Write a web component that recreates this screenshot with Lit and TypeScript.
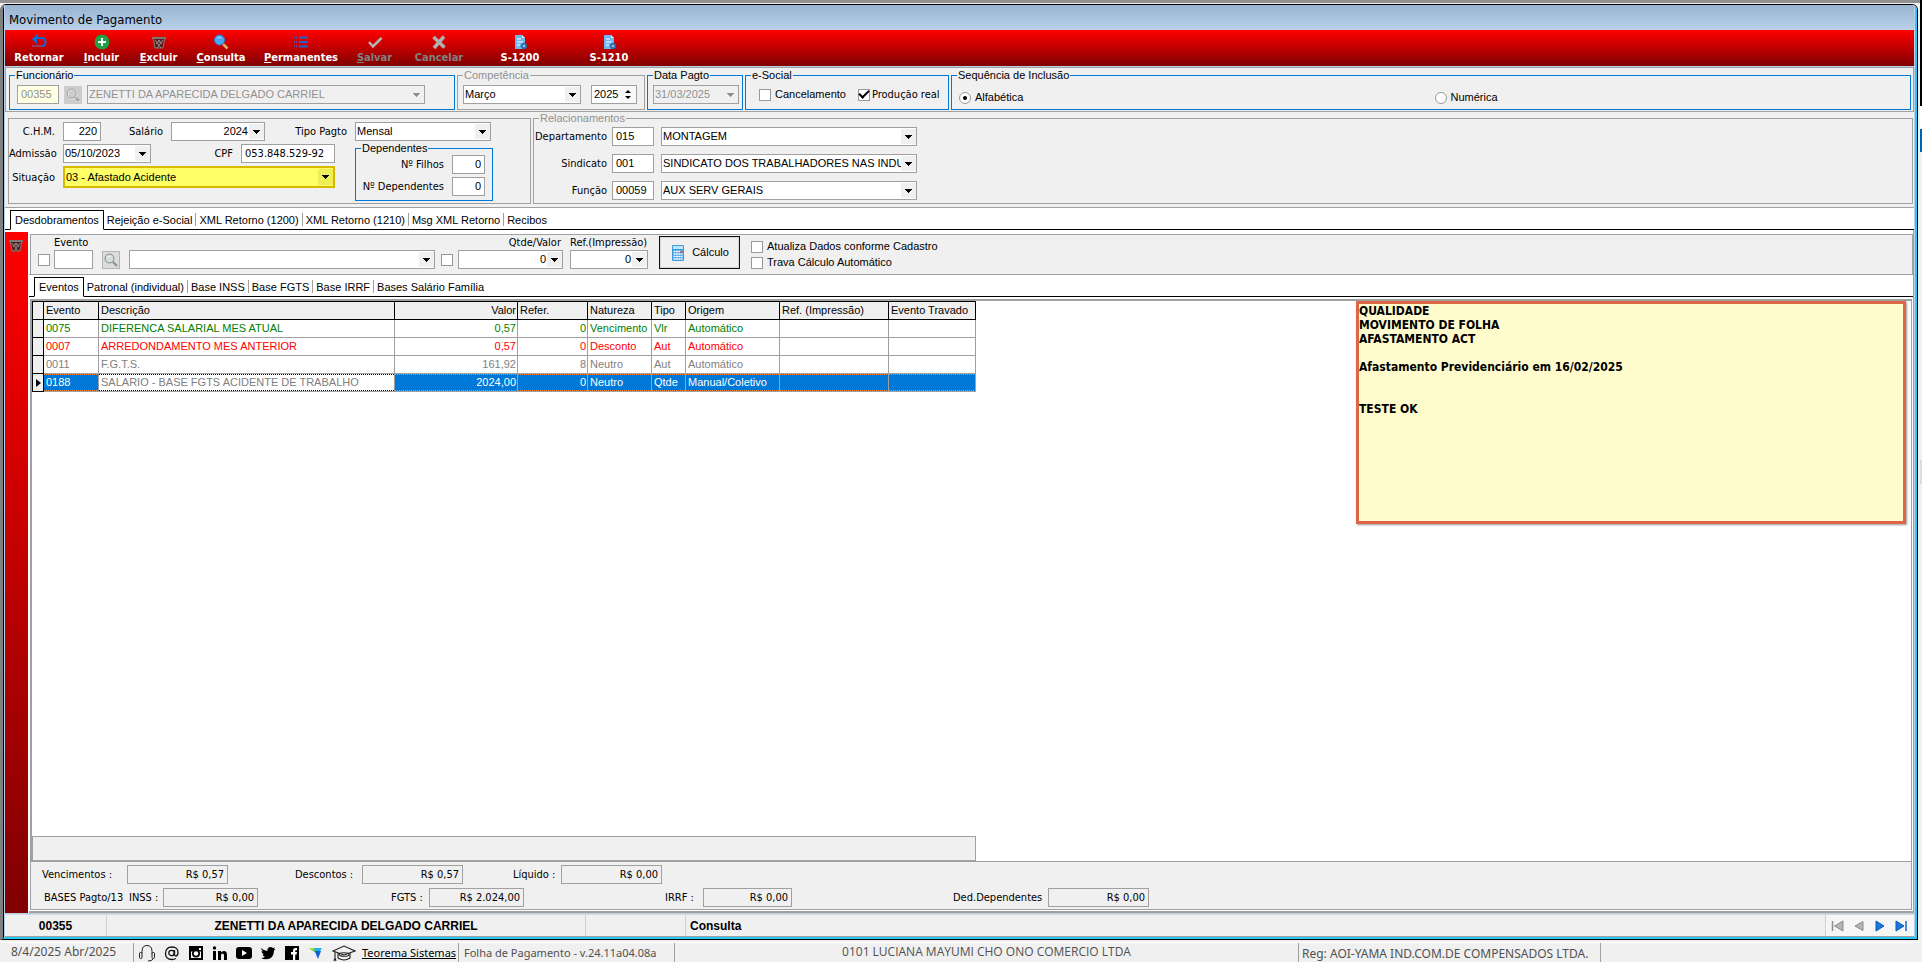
import { LitElement, html, css, svg, nothing } from "lit";
import { customElement } from "lit/decorators.js";
import { classMap } from "lit/directives/class-map.js";

const glyph = (body: unknown, w = 16, h = 16) =>
  html`<svg class="ic" width=${w} height=${h} viewBox="0 0 ${w} ${h}" aria-hidden="true">${body}</svg>`;

const icons: Record<string, unknown> = {
  back: glyph(svg`<path d="M2 5.500L6 1.500V4h5q3.500 0 3.500 4t-3.500 4" fill="none" stroke="#1068d0" stroke-width="2"/><path d="M1 5.500L6 1v9z" fill="#1068d0"/><path d="M2 11v2M4 11v2M6 11v2M8 11v2M10 11v2" stroke="#5a78c0" stroke-width="1"/>`),
  add: glyph(svg`<circle cx="8" cy="8" r="7.500" fill="#1fa045"/><path d="M8 4v8M4 8h8" stroke="#fff" stroke-width="2"/>`),
  trash: glyph(svg`<path d="M1 3h14v2H1z" fill="#777"/><path d="M2.500 5l1.500 9h8l1.500-9" fill="#5b1a1a" stroke="#7d7d7d"/><path d="M4 6l6 8M12 6l-6 8M5 10l3-4 3 4M8 6v3" stroke="#8d8d8d" fill="none"/>`),
  find: glyph(svg`<path d="M10 10l4.500 4.500" stroke="#d9b070" stroke-width="2.500"/><circle cx="6.500" cy="6" r="5" fill="#4aa8f5" stroke="#2b7fd6"/><path d="M4 4.500q2-2.500 4-.5" stroke="#b9e0ff" fill="none"/>`),
  list: glyph(svg`<path d="M6 3.500h9M6 8h9M6 12.500h9" stroke="#1666d8" stroke-width="2"/><path d="M1 3.500h3M1 8h3M1 12.500h3" stroke="#5a55a8" stroke-width="2" stroke-dasharray="1 1"/>`),
  ok: glyph(svg`<path d="M2 8l4 4.500L14.500 4" fill="none" stroke="#b5b5b5" stroke-width="2.500"/>`),
  cancel: glyph(svg`<path d="M2.500 3L13.500 13.500M13 2.500L3 14" stroke="#b0b0b0" stroke-width="3.500"/>`),
  doc: glyph(svg`<path d="M3 1h7l3 3v11H3z" fill="#6bb8f5"/><path d="M10 1l3 3h-3z" fill="#d9eeff"/><path d="M5 5h4M5 8h6M5 11h3" stroke="#fff"/><circle cx="12" cy="12" r="3" fill="#3178b8" stroke="#1c4f86" stroke-dasharray="1 1"/><circle cx="12" cy="12" r="1" fill="#c9d9e8"/>`),
  lens: glyph(svg`<path d="M10 10l4 4" stroke="#8d8d8d" stroke-width="2"/><circle cx="6.500" cy="6.500" r="4.500" fill="#cfe0dc" stroke="#7f8886"/><path d="M4.500 5.500q1.500-2 3-1" stroke="#fff" fill="none"/>`),
  lensOff: glyph(svg`<path d="M11 11l4 4" stroke="#fff"/><path d="M10 10l4 4" stroke="#a0a0a0" stroke-width="2"/><circle cx="7.500" cy="7.500" r="4.500" fill="none" stroke="#e8e8e8"/><circle cx="6.500" cy="6.500" r="4.500" fill="none" stroke="#a0a0a0"/>`),
  calc: glyph(svg`<rect x="2" y="0" width="12" height="16" rx="1" fill="#3d9be0"/><rect x="3" y="1" width="10" height="3" fill="#bfe3fa"/><path d="M3.500 6.500h9M3.500 9h9M3.500 11.500h9M3.500 14h9" stroke="#fff" stroke-width="1.600" stroke-dasharray="2 .400"/><path d="M10.500 6h2v2h-2z" fill="#e23b2e"/>`),
  headset: glyph(svg`<g fill="none" stroke="#222"><path d="M4 9.500V7.500q0-6 5-6t5 6v2"/><rect x="1.500" y="8.500" width="2.500" height="6" rx="1"/><rect x="14" y="8.500" width="2.500" height="6" rx="1"/><path d="M15 15q-1 2-5 2"/></g>`, 18, 18),
  at: glyph(svg`<g fill="none" stroke="#111" stroke-width="1.300"><circle cx="7.500" cy="8" r="2.700"/><path d="M10.500 5v4.500q0 1.500 1.500 1.500 2-.5 2-3.500 0-5.500-6-5.500-6.500 0-6.500 6.500 0 6 6.500 6 2 0 4-1"/></g>`),
  insta: glyph(svg`<rect x="1" y="1" width="14" height="14" fill="#000"/><rect x="3" y="6.500" width="10" height="6.500" fill="#fff"/><circle cx="8" cy="8.500" r="4" fill="#000"/><circle cx="8" cy="8.500" r="2.300" fill="#fff"/><rect x="11" y="3" width="2" height="2" fill="#fff"/>`),
  linkedin: glyph(svg`<path d="M1 6h3v9H1zM6 6h3v1.500Q10 6 12 6q3 0 3 4v5h-3v-4.500Q12 8.500 10.500 8.500T9 10.500V15H6z"/><circle cx="2.500" cy="3" r="1.700"/>`),
  youtube: glyph(svg`<rect x="0" y="2" width="16" height="12" rx="3"/><path d="M6 5v6l5-3z" fill="#fff"/>`),
  twitter: glyph(svg`<path d="M1 3q3 3 6.500 3Q7 2.500 10 2q2 0 3 1l2-.5-1.200 1.800L15.500 4 14 5.500Q14 14 6 14.300 3 14.300 1 13q2.500 0 4-1.200Q3 11.500 2.500 9.500H4Q1.500 8.500 1.500 6L3 6.400Q1 4.500 1 3z"/>`),
  facebook: glyph(svg`<rect x="1" y="1" width="14" height="14"/><path d="M9 15V9.500H7V7h2V5.500Q9 3 11.500 3H13v2.300h-1q-.8 0-.8.700v1H13l-.4 2.500h-1.400V15z" fill="#fff"/>`),
  brand: glyph(svg`<path d="M1 3h6l4 5-2 1z" fill="#5cc72c"/><path d="M1 3h4l3 3z" fill="#c8e02a"/><path d="M6 3h8l-3 5-4-1z" fill="#1fb5e8"/><path d="M7 6l6 0-3 8q-2-4-3-8z" fill="#1560d4"/>`),
  cap: glyph(svg`<g fill="none" stroke="#222" stroke-width="1.100"><path d="M1 7L12 2l11 5-11 4z"/><path d="M6 9v5q6 4 12 0V9"/><ellipse cx="12" cy="10.500" rx="5" ry="1.800"/><path d="M3 8v7M2 17l1-3 1 3"/></g>`, 24, 18),
  first: glyph(svg`<path d="M2.500 3v10" stroke="#8c8c8c" stroke-width="1.500"/><path d="M13 3v10L4.500 8z" fill="#b4b4b4" stroke="#8c8c8c"/>`),
  prev: glyph(svg`<path d="M12 3.500v9L4 8z" fill="#b4b4b4" stroke="#8c8c8c"/>`),
  next: glyph(svg`<path d="M4 3v10l8-5z" fill="#1878e0" stroke="#0d57b5"/>`),
  last: glyph(svg`<path d="M3 3v10l8-5z" fill="#1878e0" stroke="#0d57b5"/><path d="M13 3v10" stroke="#0d6ad8" stroke-width="1.500"/>`),
};

interface Tool { label: string; icon: string; width: number; key?: boolean; off?: boolean }
const tools: Tool[] = [
  { label: "Retornar", icon: "back", width: 68 },
  { label: "Incluir", icon: "add", width: 57, key: true },
  { label: "Excluir", icon: "trash", width: 57, key: true },
  { label: "Consulta", icon: "find", width: 68, key: true },
  { label: "Permanentes", icon: "list", width: 92, key: true },
  { label: "Salvar", icon: "ok", width: 55, key: true, off: true },
  { label: "Cancelar", icon: "cancel", width: 74, off: true },
  { label: "S-1200", icon: "doc", width: 88 },
  { label: "S-1210", icon: "doc", width: 90 },
];

const mainTabs = ["Desdobramentos", "Rejeição e-Social", "XML Retorno (1200)", "XML Retorno (1210)", "Msg XML Retorno", "Recibos"];
const subTabs = ["Eventos", "Patronal (individual)", "Base INSS", "Base FGTS", "Base IRRF", "Bases Salário Família"];

const columns = ["Evento", "Descrição", "Valor", "Refer.", "Natureza", "Tipo", "Origem", "Ref. (Impressão)", "Evento Travado"];
const rows = [
  { tone: "credit", cells: ["0075", "DIFERENCA SALARIAL MES ATUAL", "0,57", "0", "Vencimento", "Vlr", "Automático", "", ""] },
  { tone: "debit", cells: ["0007", "ARREDONDAMENTO MES ANTERIOR", "0,57", "0", "Desconto", "Aut", "Automático", "", ""] },
  { tone: "neutral", cells: ["0011", "F.G.T.S.", "161,92", "8", "Neutro", "Aut", "Automático", "", ""] },
  { tone: "current", cells: ["0188", "SALARIO - BASE FGTS ACIDENTE DE TRABALHO", "2024,00", "0", "Neutro", "Qtde", "Manual/Coletivo", "", ""] },
];

const links = ["headset", "at", "insta", "linkedin", "youtube", "twitter", "facebook", "brand", "cap"];

const noteText = `QUALIDADE
MOVIMENTO DE FOLHA
AFASTAMENTO ACT

Afastamento Previdenciário em 16/02/2025


TESTE OK`;

@customElement("app-root")
export class AppRoot extends LitElement {
  static styles = css`
    :host {
      --face: #f0f0f0;
      --line: #a0a0a0;
      --blue: #0078d7;
      --sans: "Liberation Sans", Arial, sans-serif;
      --ui: "DejaVu Sans Condensed", "DejaVu Sans", sans-serif;
      display: flex;
      height: 100vh;
      background: var(--face);
      font: 11px/13px var(--sans);
      color: #000;
    }
    * { box-sizing: border-box; }
    svg { display: block; flex: none; }
    button, input, select, textarea { font: inherit; color: inherit; margin: 0; border-radius: 0; outline: none; }
    .screen { flex: 1; min-width: 0; display: flex; flex-direction: column; border-top: 3px solid #909090; }
    .edge {
      width: 2px;
      background: linear-gradient(#000 106px, #fff 106px 129px, #0063b1 129px 152px, #f0f0f0 152px 460px, #dcdcdc 460px 484px, #f0f0f0 484px);
    }
    .window {
      flex: 1; min-height: 0;
      display: flex; flex-direction: column;
      margin: 1px 2px 2px 0;
      border: 1px solid #000;
      border-left: 3px solid #808080;
      border-radius: 6px 6px 0 0;
      overflow: hidden;
    }
    .frame {
      flex: 1; min-height: 0;
      display: flex; flex-direction: column;
      border-left: 1px solid #000;
      border-right: 2px solid #2cc8f5;
      border-bottom: 2px solid #2cc8f5;
      padding: 0 1px 0 1px;
      background: #b9d1ea;
    }
    .title {
      flex: none; height: 25px; margin: 0; padding: 0 4px;
      background: linear-gradient(#98b3d0, #b9d1ea);
      font: 13px/29px var(--ui);
    }
    .toolbar { flex: none; display: flex; height: 36px; background: linear-gradient(#f00, #800000); }
    .tool {
      display: flex; flex-direction: column; align-items: center; gap: 1px;
      padding: 4px 0 0; border: 0; background: none;
      color: #fff; font: bold 11px/13px var(--ui);
    }
    .tool:disabled { color: #808080; }

    fieldset { margin: 0; padding: 0; border: 1px solid var(--line); min-width: 0; }
    fieldset.on { border-color: var(--blue); }
    legend { margin-left: 5px; padding: 0 1px; color: #909090; line-height: 13px; }
    .on > legend { color: #000; }

    .filters {
      flex: none; display: flex; gap: 2px;
      margin-top: 1px; padding: 1px 2px 1px 3px; height: 45px;
      border: 1px solid var(--line); background: var(--face);
    }
    .row { display: flex; align-items: center; }
    .filters .row { padding: 3px 0 0 7px; }
    .filters .f-func { width: 446px; }
    .filters .f-func .row { gap: 5px; }
    .filters .f-comp { width: 188px; }
    .filters .f-comp .row { padding-left: 5px; gap: 10px; }
    .filters .f-date { width: 96px; }
    .filters .f-date .row { padding-left: 5px; }
    .filters .f-esoc { width: 204px; }
    .filters .f-esoc .row { padding: 6px 0 0 13px; gap: 12px; }
    .filters .f-seq { flex: 1; }
    .filters .f-seq .row { padding: 9px 0 0 7px; display: grid; grid-template-columns: 1fr 1fr; }

    .box {
      height: 19px; padding: 0 3px 1px; border: 1px solid var(--line); background: #fff;
      min-width: 0; width: 40px;
    }
    .box.code { background: #ffffe1; color: #909090; }
    .num { text-align: right; }
    .combo { position: relative; display: flex; height: 19px; border: 1px solid var(--line); background: #fff; }
    .combo select {
      appearance: none; flex: 1; min-width: 0; border: 0; padding: 0 14px 0 1px; background: none; text-overflow: clip; opacity: 1;
    }
    .combo select.num { text-align-last: right; padding-right: 16px; }
    .combo::after {
      content: ""; position: absolute; right: 0; top: 1px; bottom: 1px; width: 15px; pointer-events: none;
      background:
        linear-gradient(#000, #000) center 6px / 7px 1px no-repeat,
        linear-gradient(#000, #000) center 7px / 5px 1px no-repeat,
        linear-gradient(#000, #000) center 8px / 3px 1px no-repeat,
        linear-gradient(#000, #000) center 9px / 1px 1px no-repeat,
        var(--face);
    }
    .combo.off { background: var(--face); color: #909090; }
    .combo.off::after { opacity: .4; }
    .combo.mark { height: 22px; border: 2px solid #d9b800; background: #ffff66; }
    .combo.mark::after { background-color: #eeee58; }
    .squash {
      display: flex; align-items: center; justify-content: center; width: 18px; height: 18px; padding: 0;
      border: 1px solid #b4b4b4; background: #dcdcdc;
    }
    .squash:disabled { background: #ccc; border-color: #ccc; }
    .spin { display: flex; width: 46px; height: 19px; border: 1px solid var(--line); background: #fff; }
    .spin input { width: 28px; border: 0; padding: 0 0 1px 2px; background: none; }
    .arrows { flex: 1; display: grid; background: #f8f8f8; align-content: space-evenly; justify-items: center; }
    .arrows i { border: 3px solid transparent; border-top: 0; border-bottom: 3px solid #000; }
    .arrows i + i { border-bottom: 0; border-top: 3px solid #000; }

    .check { display: inline-flex; align-items: center; gap: 4px; white-space: nowrap; }
    .check input { appearance: none; flex: none; width: 12px; height: 12px; border: 1px solid #999; background: #fff; display: grid; place-items: center; }
    .check input[type="radio"] { border-radius: 50%; }
    .check input[type="radio"]:checked::before { content: ""; width: 4px; height: 4px; border-radius: 50%; background: #000; }
    .check input[type="checkbox"]:checked::before {
      content: ""; width: 8px; height: 4px; margin-top: -3px; border: solid #000; border-width: 0 0 2px 2px; transform: rotate(-45deg);
    }
    .ui { font-family: var(--ui); }
    .check.ui { gap: 2px; }

    .person { flex: none; display: flex; gap: 2px; height: 95px; padding: 0 1px 3px 3px; background: var(--face); }
    .details { width: 523px; margin-top: 6px; padding: 3px 0 0 0; border: 1px solid var(--line); display: flex; flex-direction: column; gap: 1px; }
    .lab { font-family: var(--ui); text-align: right; white-space: nowrap; padding-right: 8px; }
    .l54 { width: 54px; }
    .l70 { width: 70px; }
    .l90 { width: 90px; }
    .w33 { width: 33px; }
    .w38 { width: 38px; }
    .w42 { width: 42px; }
    .w86 { width: 86px; }
    .w88 { width: 88px; }
    .w94 { width: 94px; }
    .w118 { width: 118px; }
    .w136 { width: 136px; }
    .w256 { width: 256px; }
    .w272 { width: 272px; }
    .w338 { width: 338px; }
    .split { display: flex; gap: 20px; }
    .stack { display: flex; flex-direction: column; gap: 3px; }
    .split > .stack { padding-top: 2px; }
    .deps { width: 138px; height: 59px; }
    .deps .lab { width: 96px; }
    .rel { flex: 1; }
    .rel .stack { gap: 8px; padding-top: 2px; }
    .rel .lab { width: 78px; padding-right: 5px; }
    .rel .box { margin-right: 7px; }

    .tabs { flex: none; display: flex; align-items: flex-end; height: 23px; padding: 0 5px; background: #fff; border-top: 1px solid var(--line); box-shadow: inset 0 -1px #000; white-space: nowrap; }
    .tab { padding: 0 3px; height: 19px; border: 0; background: none; line-height: 19px; }
    .tab + .tab:not(:last-child) { padding-right: 4px; background: linear-gradient(var(--line), var(--line)) right 2px / 1px 13px no-repeat; }
    .tab.active { height: 20px; padding: 0 4px; border: 1px solid #000; border-bottom-color: #fff; background: #fff; }

    .work { flex: 1; min-height: 0; display: flex; gap: 1px; background: #fff; padding-top: 2px; border-right: 1px solid var(--line); }
    .rail { width: 23px; padding: 5px 0 0 3px; background: linear-gradient(#f00, #800000); }
    .pane { flex: 1; min-width: 0; display: flex; flex-direction: column; padding: 2px 0 1px; border-bottom: 2px solid var(--line); }
    .entry { flex: none; display: flex; height: 40px; margin-left: 1px; border: 1px solid var(--line); border-bottom: 0; background: var(--face); }
    .entry .lab { text-align: left; padding: 0; }
    .eg { display: grid; grid-template-rows: 15px 19px; align-items: center; align-content: start; }
    .eg-a { grid-template-columns: 16px 39px; padding-left: 7px; }
    .eg-b { grid-template-columns: 18px 306px; column-gap: 9px; padding-left: 9px; }
    .eg-c { grid-template-columns: 12px 105px; column-gap: 5px; padding-left: 6px; }
    .eg-d { grid-template-columns: 78px; padding-left: 7px; }
    .lo { grid-row: 2; }
    .eg .c2 { grid-column: 2; }
    .entry .eg-c .lab { text-align: right; padding-right: 2px; }
    .eg .w39 { width: 39px; }
    .run {
      display: flex; align-items: center; justify-content: center; gap: 6px;
      width: 81px; height: 33px; margin: 1px 11px 0; padding: 0; border: 1px solid #111; background: var(--face);
      box-shadow: inset 0 0 0 1px #d4d4d4;
    }
    .opts { display: flex; flex-direction: column; justify-content: center; gap: 3px; }
    .sub { padding-left: 5px; }
    .sheet {
      flex: 1; min-height: 0; display: flex; justify-content: space-between;
      margin: 2px 1px 0 1px; border: 1px solid var(--line); border-width: 2px 1px 1px 2px; background: #fff; padding-right: 5px;
    }
    .gridcol { display: flex; flex-direction: column; justify-content: space-between; width: 944px; flex: none; }
    table { table-layout: fixed; border-collapse: separate; border-spacing: 0; width: 944px; border-left: 1px solid #000; }
    th, td { height: 18px; padding: 0 1px 0 2px; border-right: 1px solid var(--line); border-bottom: 1px solid var(--line); overflow: hidden; white-space: nowrap; text-align: left; font-weight: normal; }
    th { height: 19px; border-color: #000; border-top: 1px solid #000; background: var(--face); }
    td.ind { border-color: #000; background: var(--face); padding: 0; }
    th.r, td.r { text-align: right; }
    .k0 { width: 11px; } .k1 { width: 55px; } .k2 { width: 296px; } .k3 { width: 123px; } .k4 { width: 70px; }
    .k5 { width: 64px; } .k6 { width: 34px; } .k7 { width: 94px; } .k8 { width: 109px; } .k9 { width: 87px; }
    .credit { color: #008000; }
    .debit { color: #f00; }
    .neutral { color: #808080; }
    .current td:not(.ind) {
      --dot: #ff8728;
      color: #fff;
      background:
        repeating-linear-gradient(90deg, var(--dot) 0 1px, transparent 1px 2px) top / 100% 1px no-repeat,
        repeating-linear-gradient(90deg, var(--dot) 0 1px, transparent 1px 2px) bottom / 100% 1px no-repeat,
        var(--blue);
    }
    .current td.desc:not(.ind) { --dot: #000; color: #808080; background-color: #fff; }
    .pointer { display: block; width: 0; margin-left: 3px; border: 4px solid transparent; border-left: 5px solid #000; border-right: 0; }
    .gridfoot { height: 25px; border: 1px solid var(--line); background: var(--face); }
    .note {
      width: 550px; height: 223px; resize: none; padding: 0; border: 3px solid #dc6646;
      background: #fffbcc; font: bold 12px/14px var(--ui); box-shadow: 1px 1px 2px #999; overflow: hidden;
    }
    .totals { flex: none; display: flex; flex-direction: column; gap: 4px; height: 48px; margin: 0 1px 0 1px; padding: 3px 0 0; border: 1px solid var(--line); border-top: 0; background: var(--face); font-family: var(--ui); }
    .totals label, .totals span { white-space: nowrap; }
    .totals .box { background: var(--face); }
    .t1 { display: flex; align-items: center; }
    .g11 { margin-left: 11px; } .g13 { margin-left: 13px; } .g50 { margin-left: 50px; } .g67 { margin-left: 67px; }
    .g133 { margin-left: 133px; } .g141 { margin-left: 141px; } .g161 { margin-left: 161px; }
    .n34 { width: 34px; } .n38 { width: 38px; } .n48 { width: 48px; } .n67 { width: 67px; } .n85 { width: 85px; } .n95 { width: 95px; }
    .totals .v101 { width: 101px; } .totals .v95 { width: 95px; } .totals .v89 { width: 89px; }

    .record { flex: none; display: flex; height: 23px; margin-top: 1px; border-top: 1px solid #d8d8d8; border-bottom: 1px solid var(--line); background: var(--face); font: bold 12px/23px var(--sans); }
    .record > span { border-right: 1px solid #d0d0d0; text-align: center; }
    .c-code { width: 102px; } .c-name { width: 479px; } .c-gap { width: 100px; }
    .record .c-mode { flex: 1; text-align: left; padding-left: 4px; }
    .nav { display: flex; gap: 5px; padding: 0 5px 0 4px; align-items: center; background: #f6f6f6; }
    .nav button { border: 0; background: none; padding: 0; }

    .status { flex: none; display: flex; height: 20px; background: var(--face); border-top: 1px solid #fff; color: #505050; font: 12px/18px "Noto Sans", "Open Sans", sans-serif; white-space: nowrap; }
    .status > * { border-right: 1px solid var(--line); overflow: hidden; }
    .s-date { width: 134px; padding-left: 11px; }
    .s-links { display: flex; align-items: center; gap: 6px; width: 325px; padding-left: 4px; }
    .s-icons { display: flex; align-items: center; gap: 8px; }
    .s-links a { color: #000; font-size: 11px; line-height: 16px; }
    .s-ver { width: 216px; padding-left: 5px; font-size: 11px; line-height: 20px; }
    .s-org { width: 624px; text-align: center; font-family: "Open Sans", sans-serif; }
    .s-reg { width: 302px; padding-left: 3px; line-height: 22px; }
  `;

  private combo(id: string, value: string, size: string, o: { num?: boolean; off?: boolean; mark?: boolean; label?: string } = {}) {
    return html`<span class=${classMap({ combo: true, [size]: true, off: !!o.off, mark: !!o.mark })}>
      <select id=${id} class=${o.num ? "num" : ""} ?disabled=${o.off} aria-label=${o.label ?? nothing}><option>${value}</option></select>
    </span>`;
  }

  private tabs(items: string[], extra = "") {
    return html`<nav class="tabs ${extra}">${items.map((t, i) => html`<button class=${classMap({ tab: true, active: i === 0 })}>${t}</button>`)}</nav>`;
  }

  private total(id: string, label: string, labelCls: string, boxCls: string, value: string) {
    return html`<label for=${id} class=${labelCls}>${label}</label><input id=${id} class="box num ${boxCls}" readonly .value=${value} />`;
  }

  render() {
    return html`
      <div class="screen">
        <main class="window">
          <div class="frame">
            <h1 class="title">Movimento de Pagamento</h1>
            <div class="toolbar">
              ${tools.map((t) => html`<button class="tool" ?disabled=${t.off} style="width:${t.width}px">${icons[t.icon]}<span>${t.key ? html`<u>${t.label[0]}</u>${t.label.slice(1)}` : t.label}</span></button>`)}
            </div>
            <section class="filters">
              <fieldset class="on f-func"><legend>Funcionário</legend>
                <div class="row">
                  <input class="box code w42" aria-label="Código" disabled .value=${"00355"} />
                  <button class="squash" disabled aria-label="Pesquisar">${icons.lensOff}</button>
                  ${this.combo("func", "ZENETTI DA APARECIDA DELGADO CARRIEL", "w338", { off: true, label: "Funcionário" })}
                </div>
              </fieldset>
              <fieldset class="f-comp"><legend>Competência</legend>
                <div class="row">
                  ${this.combo("mes", "Março", "w118", { label: "Mês" })}
                  <span class="spin"><input aria-label="Ano" .value=${"2025"} /><span class="arrows"><i></i><i></i></span></span>
                </div>
              </fieldset>
              <fieldset class="on f-date"><legend>Data Pagto</legend>
                <div class="row">${this.combo("data", "31/03/2025", "w86", { off: true, label: "Data Pagto" })}</div>
              </fieldset>
              <fieldset class="on f-esoc"><legend>e-Social</legend>
                <div class="row">
                  <label class="check"><input type="checkbox" />Cancelamento</label>
                  <label class="check ui"><input type="checkbox" checked />Produção real</label>
                </div>
              </fieldset>
              <fieldset class="on f-seq"><legend>Sequência de Inclusão</legend>
                <div class="row">
                  <label class="check"><input type="radio" name="seq" checked />Alfabética</label>
                  <label class="check"><input type="radio" name="seq" />Numérica</label>
                </div>
              </fieldset>
            </section>

            <section class="person">
              <div class="details">
                <div class="row">
                  <label class="lab l54" for="chm">C.H.M.</label><input id="chm" class="box num w38" .value=${"220"} />
                  <label class="lab l70" for="sal">Salário</label>${this.combo("sal", "2024", "w94", { num: true })}
                  <label class="lab l90" for="tipo">Tipo Pagto</label>${this.combo("tipo", "Mensal", "w136")}
                </div>
                <div class="split">
                  <div class="stack">
                    <div class="row">
                      <label class="lab l54" for="adm">Admissão</label>${this.combo("adm", "05/10/2023", "w88")}
                      <label class="lab l90" for="cpf">CPF</label><input id="cpf" class="box ui w94" .value=${"053.848.529-92"} />
                    </div>
                    <div class="row">
                      <label class="lab l54" for="sit">Situação</label>${this.combo("sit", "03 - Afastado Acidente", "w272", { mark: true })}
                    </div>
                  </div>
                  <fieldset class="on deps"><legend>Dependentes</legend>
                    <div class="stack">
                      <div class="row"><label class="lab" for="nf">Nº Filhos</label><input id="nf" class="box num w33" .value=${"0"} /></div>
                      <div class="row"><label class="lab" for="nd">Nº Dependentes</label><input id="nd" class="box num w33" .value=${"0"} /></div>
                    </div>
                  </fieldset>
                </div>
              </div>
              <fieldset class="rel"><legend>Relacionamentos</legend>
                <div class="stack">
                  <div class="row"><label class="lab" for="dep">Departamento</label><input class="box w42" aria-label="Código do departamento" .value=${"015"} />${this.combo("dep", "MONTAGEM", "w256")}</div>
                  <div class="row"><label class="lab" for="sind">Sindicato</label><input class="box w42" aria-label="Código do sindicato" .value=${"001"} />${this.combo("sind", "SINDICATO DOS TRABALHADORES NAS INDU", "w256")}</div>
                  <div class="row"><label class="lab" for="fun">Função</label><input class="box w42" aria-label="Código da função" .value=${"00059"} />${this.combo("fun", "AUX SERV GERAIS", "w256")}</div>
                </div>
              </fieldset>
            </section>

            ${this.tabs(mainTabs)}
            <section class="work">
              <aside class="rail">${icons.trash}</aside>
              <div class="pane">
                <div class="entry">
                  <div class="eg eg-a">
                    <label class="lab c2" for="ev">Evento</label>
                    <span class="check lo"><input type="checkbox" aria-label="Fixar evento" /></span>
                    <input id="ev" class="box w39 lo c2" />
                  </div>
                  <div class="eg eg-b">
                    <button class="squash lo" aria-label="Pesquisar evento">${icons.lens}</button>
                    <span class="combo lo c2"><select aria-label="Descrição do evento"><option></option></select></span>
                  </div>
                  <div class="eg eg-c">
                    <label class="lab c2" for="qt">Qtde/Valor</label>
                    <span class="check lo"><input type="checkbox" aria-label="Fixar valor" /></span>
                    <span class="combo lo c2"><select id="qt" class="num"><option>0</option></select></span>
                  </div>
                  <div class="eg eg-d">
                    <label class="lab" for="rf">Ref.(Impressão)</label>
                    <span class="combo lo"><select id="rf" class="num"><option>0</option></select></span>
                  </div>
                  <button class="run">${icons.calc}Cálculo</button>
                  <div class="opts">
                    <label class="check"><input type="checkbox" />Atualiza Dados conforme Cadastro</label>
                    <label class="check"><input type="checkbox" />Trava Cálculo Automático</label>
                  </div>
                </div>
                ${this.tabs(subTabs, "sub")}
                <div class="sheet">
                  <div class="gridcol">
                    <table>
                      <colgroup>${[0, 1, 2, 3, 4, 5, 6, 7, 8, 9].map((n) => html`<col class="k${n}" />`)}</colgroup>
                      <thead><tr><th></th>${columns.map((c, i) => html`<th class=${i === 2 ? "r" : ""}>${c}</th>`)}</tr></thead>
                      <tbody>
                        ${rows.map((r) => html`<tr class=${r.tone}><td class="ind">${r.tone === "current" ? html`<i class="pointer"></i>` : nothing}</td>${r.cells.map((c, i) => html`<td class=${classMap({ r: i === 2 || i === 3, desc: i === 1 })}>${c}</td>`)}</tr>`)}
                      </tbody>
                    </table>
                    <div class="gridfoot"></div>
                  </div>
                  <textarea class="note" aria-label="Observações" .value=${noteText}></textarea>
                </div>
                <div class="totals">
                  <div class="t1">
                    ${this.total("tv", "Vencimentos :", "g11 n85", "v101", "R$ 0,57")}
                    ${this.total("td", "Descontos  :", "g67 n67", "v101", "R$ 0,57")}
                    ${this.total("tl", "Líquido :", "g50 n48", "v101", "R$ 0,00")}
                  </div>
                  <div class="t1">
                    <span class="g13 n85">BASES Pagto/13</span>
                    ${this.total("bi", "INSS :", "n34", "v95", "R$ 0,00")}
                    ${this.total("bf", "FGTS :", "g133 n38", "v95", "R$ 2.024,00")}
                    ${this.total("br", "IRRF :", "g141 n38", "v89", "R$ 0,00")}
                    ${this.total("bd", "Ded.Dependentes", "g161 n95", "v101", "R$ 0,00")}
                  </div>
                </div>
              </div>
            </section>
            <div class="record">
              <span class="c-code">00355</span><span class="c-name">ZENETTI DA APARECIDA DELGADO CARRIEL</span><span class="c-gap"></span><span class="c-mode">Consulta</span>
              <div class="nav">
                <button aria-label="Primeiro">${icons.first}</button><button aria-label="Anterior">${icons.prev}</button><button aria-label="Próximo">${icons.next}</button><button aria-label="Último">${icons.last}</button>
              </div>
            </div>
          </div>
        </main>
        <footer class="status">
          <span class="s-date">8/4/2025 Abr/2025</span>
          <span class="s-links"><span class="s-icons">${links.map((n) => icons[n])}</span><a href="#">Teorema Sistemas</a></span>
          <span class="s-ver">Folha de Pagamento - v.24.11a04.08a</span>
          <span class="s-org">0101 LUCIANA MAYUMI CHO ONO COMERCIO LTDA</span>
          <span class="s-reg">Reg: AOI-YAMA IND.COM.DE COMPENSADOS LTDA.</span>
        </footer>
      </div>
      <div class="edge"></div>
    `;
  }
}
